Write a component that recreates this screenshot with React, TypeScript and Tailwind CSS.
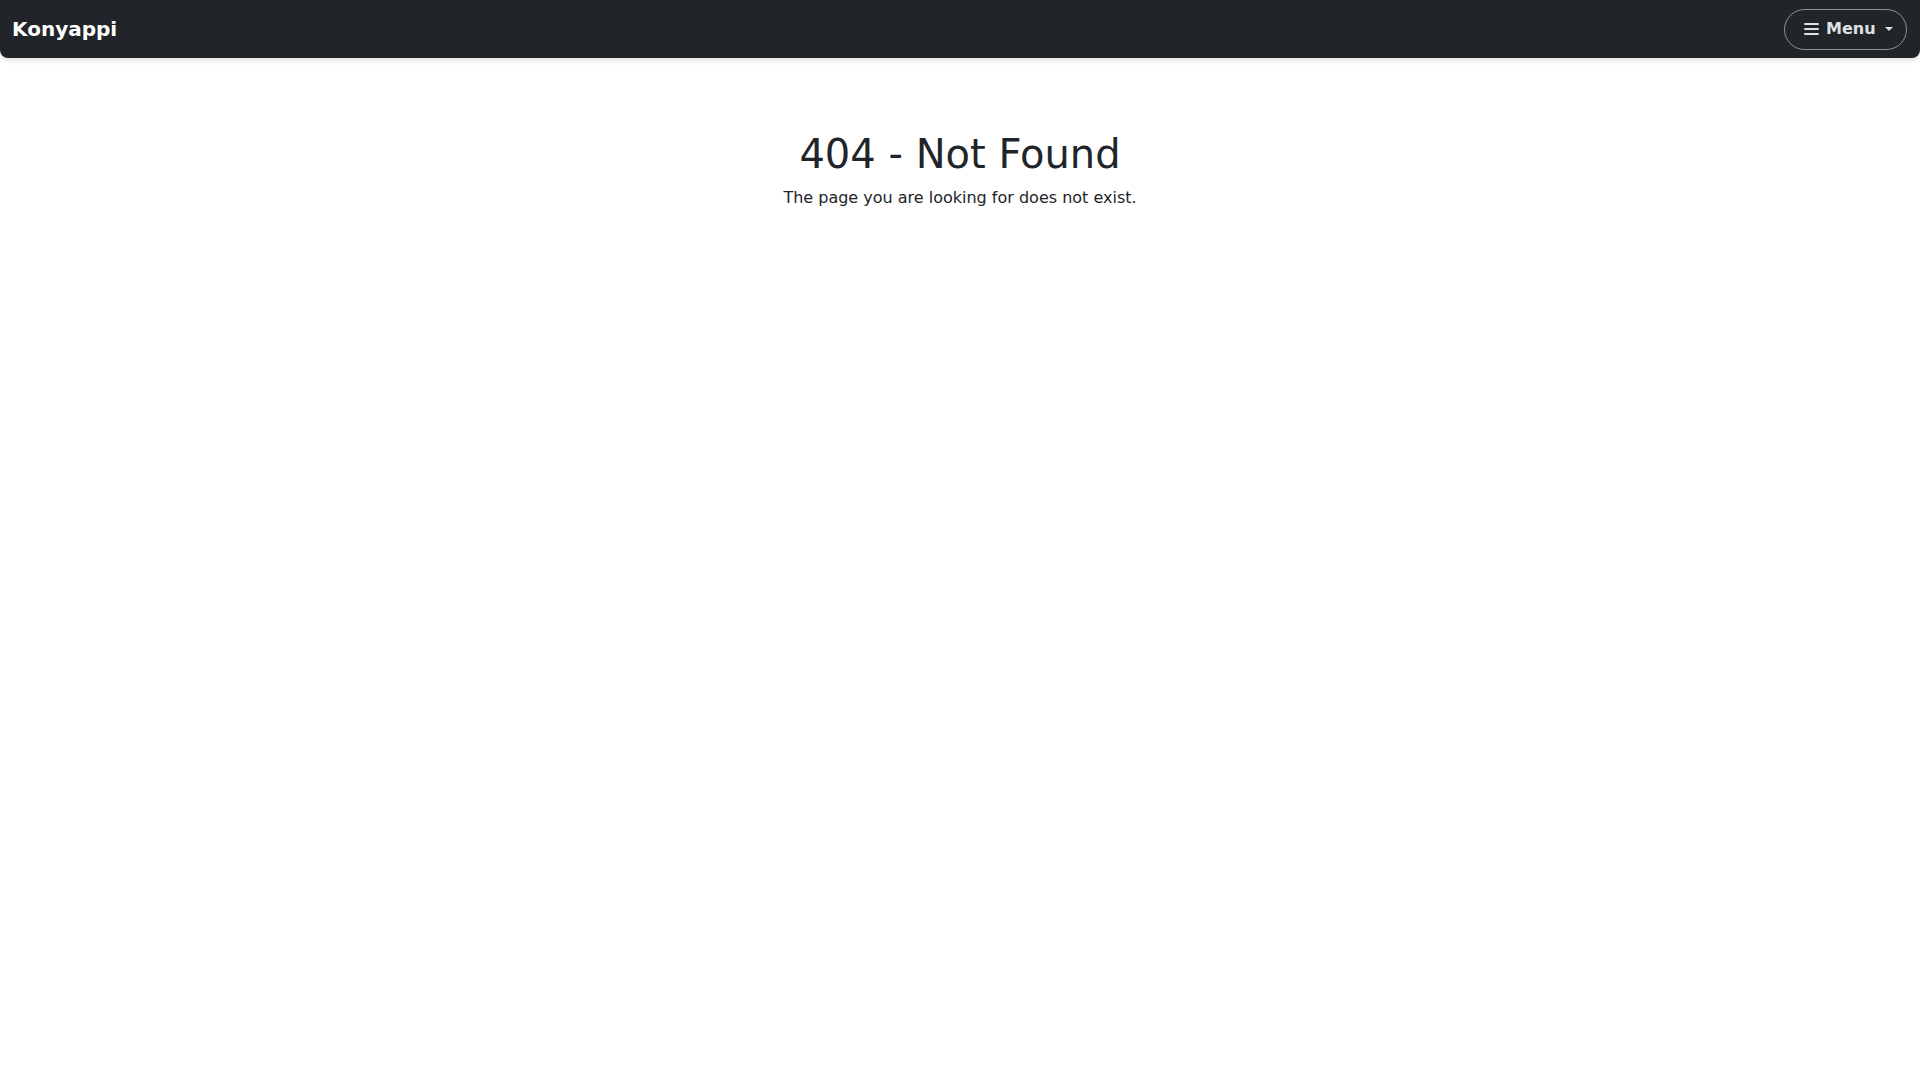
function ListIcon() {
  return (
    <svg className="h-[12px] w-[15px]" viewBox="0 0 15 12" fill="currentColor">
      <rect x="0" y="0" width="15" height="2" rx="1" />
      <rect x="0" y="5" width="15" height="2" rx="1" />
      <rect x="0" y="10" width="15" height="2" rx="1" />
    </svg>
  )
}

export default function App() {
  return (
    <div className="min-h-screen bg-white text-[#212529] font-['DejaVu_Sans','Liberation_Sans',sans-serif]">
      {/* navbar */}
      <nav className="flex h-[58px] items-center justify-between rounded-b-lg bg-[#212529] pl-3 pr-[13px] shadow-[0_2px_6px_rgba(0,0,0,0.15)]">
        <a href="#" className="text-[20px] font-bold leading-[30px] text-white">
          Konyappi
        </a>
        <button className="flex h-[41px] w-[123px] items-center rounded-full border border-[#8f9193] pl-[19px] text-[16px] font-bold text-[#dee2e6]">
          <ListIcon />
          <span className="ml-[7px]">Menu</span>
          <span className="ml-[9px] h-0 w-0 border-x-[4px] border-t-[4px] border-x-transparent border-t-[#dee2e6]" />
        </button>
      </nav>

      {/* content */}
      <main className="pt-[72px] text-center">
        <h1 className="mb-2 text-[40px] font-normal leading-[48px]">404 - Not Found</h1>
        <p className="text-[16px] leading-6">The page you are looking for does not exist.</p>
      </main>
    </div>
  )
}
